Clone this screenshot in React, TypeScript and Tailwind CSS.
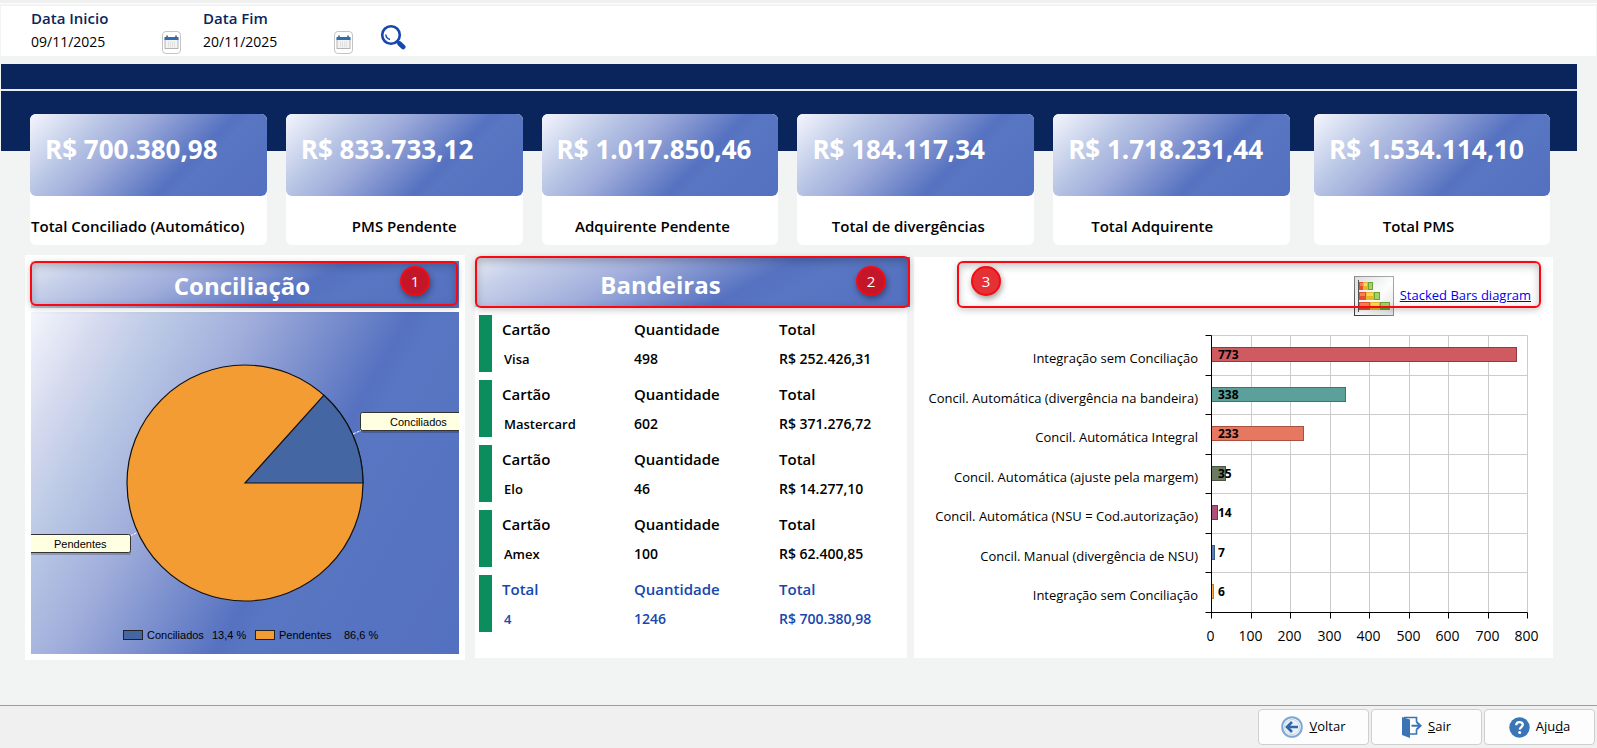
import * as React from "react";

// ── Data ─────────────────────────────────────────────────────────────────────

interface Summary {
  value: string;
  label: string;
  align: string;
}

const SUMMARIES: Summary[] = [
  { value: "R$ 700.380,98", label: "Total Conciliado (Automático)", align: "text-left" },
  { value: "R$ 833.733,12", label: "PMS Pendente", align: "text-center" },
  { value: "R$ 1.017.850,46", label: "Adquirente Pendente", align: "pr-4 text-center" },
  { value: "R$ 184.117,34", label: "Total de divergências", align: "pr-4 text-center" },
  { value: "R$ 1.718.231,44", label: "Total Adquirente", align: "pr-10 text-center" },
  { value: "R$ 1.534.114,10", label: "Total PMS", align: "pr-7 text-center" },
];

const BRANDS = [
  { title: "Cartão", name: "Visa", count: "498", total: "R$ 252.426,31" },
  { title: "Cartão", name: "Mastercard", count: "602", total: "R$ 371.276,72" },
  { title: "Cartão", name: "Elo", count: "46", total: "R$ 14.277,10" },
  { title: "Cartão", name: "Amex", count: "100", total: "R$ 62.400,85" },
  { title: "Total", name: "4", count: "1246", total: "R$ 700.380,98" },
];

const BARS = [
  { label: "Integração sem Conciliação", value: 773, fill: "#cf5b60", stroke: "#96393f" },
  { label: "Concil. Automática (divergência na bandeira)", value: 338, fill: "#5ba09a", stroke: "#3c746f" },
  { label: "Concil. Automática Integral", value: 233, fill: "#e67761", stroke: "#a9503f" },
  { label: "Concil. Automática (ajuste pela margem)", value: 35, fill: "#6c7c62", stroke: "#4b5744" },
  { label: "Concil. Automática (NSU = Cod.autorização)", value: 14, fill: "#a8527c", stroke: "#7a3456" },
  { label: "Concil. Manual (divergência de NSU)", value: 7, fill: "#5a7fb4", stroke: "#3c5c8c" },
  { label: "Integração sem Conciliação", value: 6, fill: "#f5b04c", stroke: "#b98237" },
];

const TICKS = [0, 100, 200, 300, 400, 500, 600, 700, 800];

// ── Callouts ─────────────────────────────────────────────────────────────────

function Callout({ n, box, badge }: { n: number; box: string; badge: string }) {
  return (
    <>
      <div
        className={`pointer-events-none absolute z-10 rounded-md border-2 border-[#fb0710] shadow-[0_2px_7px_rgba(0,0,0,0.22),inset_0_3px_8px_rgba(0,0,0,0.24)] ${box}`}
      />
      <span
        className={`absolute z-10 flex h-[30px] w-[30px] items-center justify-center rounded-full border-2 border-[#f80a12] text-[15px] leading-none text-white shadow-[1px_3px_6px_rgba(0,0,0,0.4)] ${badge}`}
      >
        {n}
      </span>
    </>
  );
}

// ── Filters ──────────────────────────────────────────────────────────────────

function CalendarIcon() {
  return (
    <svg width="15" height="15" viewBox="0 0 15 15" aria-hidden="true">
      <rect x="1" y="4" width="13" height="9.500" fill="#f3f3f3" stroke="#b4b4b4" strokeWidth="1" />
      <path d="M0.500 2h14v3h-14z" fill="#2f6db3" />
      <path d="M2 0.500h2v1.500H2zM11 0.500h2v1.500h-2z" fill="#6f7d8b" />
      <path d="M4.500 6.500v6M6.500 6.500v6M8.500 6.500v6M10.500 6.500v6" stroke="#e0e0e0" strokeWidth="1" />
    </svg>
  );
}

function DateField({ id, label, initial }: { id: string; label: string; initial: string }) {
  const [value, setValue] = React.useState(initial);

  return (
    <div className="w-[172px]">
      <label htmlFor={id} className="block text-[15px] leading-6 font-semibold text-[#0a255c]">
        {label}
      </label>
      <div className="flex items-center">
        <input
          id={id}
          value={value}
          onChange={(e) => setValue(e.target.value)}
          className="w-[131px] bg-transparent text-sm leading-6 text-black outline-none"
        />
        <button
          type="button"
          aria-label={`Calendário ${label}`}
          className="flex h-[23px] w-[19px] items-center justify-center rounded border border-[#c4c4c4] bg-white"
        >
          <CalendarIcon />
        </button>
      </div>
    </div>
  );
}

// ── Summary cards ────────────────────────────────────────────────────────────

function SummaryCard({ value, label, align }: Summary) {
  return (
    <div className="rounded-md bg-white">
      <div className="rounded-md bg-[linear-gradient(135deg,#f5f6fd_0%,#b9c6e5_24%,#a0addb_38%,#5571c0_65%,#5876c2_70%,#5470c0_100%)] px-[15px] pt-[17px] pb-[29px] text-[26px] leading-9 font-bold whitespace-nowrap text-white">
        {value}
      </div>
      <div className={`px-px pt-[18px] pb-[7px] text-[15px] leading-6 font-semibold whitespace-nowrap text-black ${align}`}>
        {label}
      </div>
    </div>
  );
}

// ── Pie chart ────────────────────────────────────────────────────────────────

function PieChart() {
  return (
    <svg viewBox="0 0 428 342" className="block w-full" fontFamily="'Liberation Sans', Arial, sans-serif" fontSize="11">
      <circle cx="214" cy="171" r="118" fill="#f39c34" stroke="#111" strokeWidth="1.200" />
      <path d="M214 171L293 83.200A118 118 0 0 1 332 171Z" fill="#4466a3" stroke="#111" strokeWidth="1.200" />
      <path d="M322 122L330 118.500M99 224L106.500 220.500" stroke="#fff" strokeDasharray="3 1" />

      <rect x="330" y="103" width="120" height="18" rx="2" fill="#000" opacity="0.200" />
      <rect x="329.500" y="100.500" width="120" height="18" rx="2" fill="#ffffe1" stroke="#333" />
      <text x="359" y="114">Conciliados</text>

      <rect x="-20" y="225" width="120" height="18" rx="2" fill="#000" opacity="0.200" />
      <rect x="-20.500" y="222.500" width="120" height="18" rx="2" fill="#ffffe1" stroke="#333" />
      <text x="23" y="236">Pendentes</text>

      <rect x="92.500" y="318.500" width="19" height="9" fill="#4466a3" stroke="#222" />
      <text x="116" y="327">Conciliados</text>
      <text x="181" y="327">13,4 %</text>
      <rect x="224.500" y="318.500" width="19" height="9" fill="#f39c34" stroke="#222" />
      <text x="248" y="327">Pendentes</text>
      <text x="313" y="327">86,6 %</text>
    </svg>
  );
}

// ── Bar chart ────────────────────────────────────────────────────────────────

const AXIS_X = 297.5;
const AXIS_TOP = 18.5;
const AXIS_BOTTOM = 295.5;
const PLOT_W = 316;

function BarChart() {
  const scale = (v: number) => (v / 800) * PLOT_W;
  const rowY = (i: number) => Math.round(18 + (i * 277) / 7) + 0.5;

  return (
    <svg viewBox="0 0 639 341" className="block w-full" fontSize="13">
      {TICKS.map((t) => {
        const x = Math.floor(AXIS_X + scale(t)) + 0.5;
        return (
          <g key={t}>
            <path d={`M${x} ${AXIS_TOP}V${AXIS_BOTTOM}`} stroke="#cccccc" />
            <path d={`M${x} ${AXIS_BOTTOM}v6`} stroke="#000" />
            <text x={x - 1} y="324" fontSize="14" textAnchor="middle">
              {t}
            </text>
          </g>
        );
      })}
      {BARS.map((bar, i) => (
        <g key={i}>
          <path d={`M${AXIS_X} ${rowY(i)}h${PLOT_W}`} stroke="#cccccc" />
          <path d={`M${AXIS_X} ${rowY(i)}h-6`} stroke="#000" />
          <text x="284" y={rowY(i) + 27} textAnchor="end">
            {bar.label}
          </text>
          <rect
            x={AXIS_X}
            y={rowY(i) + 12}
            width={Math.round(scale(bar.value))}
            height="14"
            fill={bar.fill}
            stroke={bar.stroke}
          />
          <text x="304" y={rowY(i) + 23.5} fontSize="12" fontWeight="700">
            {bar.value}
          </text>
        </g>
      ))}
      <path d={`M${AXIS_X} ${AXIS_TOP}V${AXIS_BOTTOM}M${AXIS_X - 6} ${AXIS_BOTTOM}h${PLOT_W + 6}`} stroke="#000" />
    </svg>
  );
}

function StackedBarsIcon() {
  return (
    <svg width="40" height="40" viewBox="0 0 40 40" aria-hidden="true">
      <defs>
        <linearGradient id="frame" x1="0" y1="1" x2="1" y2="0">
          <stop offset="0" stopColor="#3c3c3c" />
          <stop offset="0.600" stopColor="#9a9a9a" />
          <stop offset="1" stopColor="#a8a8a8" />
        </linearGradient>
        <linearGradient id="paper" x1="0" y1="0" x2="1" y2="1">
          <stop offset="0" stopColor="#d9dde2" />
          <stop offset="0.550" stopColor="#fdfdfd" />
          <stop offset="1" stopColor="#e2e2e2" />
        </linearGradient>
      </defs>
      <rect x="0.500" y="0.500" width="39" height="39" fill="url(#paper)" stroke="url(#frame)" />
      <path d="M5 6h4v8H5zM5 16h7v8H5zM5 26h11v8H5z" fill="#e2502f" />
      <path d="M6 7h3v3H6zM6 17h5v3H6zM6 27h9v3H6z" fill="#f58252" />
      <path d="M9 6h5v8H9zM12 16h8v8h-8zM16 26h10v8H16z" fill="#eab52b" />
      <path d="M10 7h3v3h-3zM13 17h6v3h-6zM17 27h8v3h-8z" fill="#f9dc55" />
      <path d="M14 6h5v8h-5zM20 16h6v8h-6zM26 26h10v8H26z" fill="#6ba336" />
      <path d="M15 7h3v6h-3zM21 17h4v6h-4zM27 27h8v4h-8z" fill="#a5d267" />
      <path d="M4.500 4v32" stroke="#555" />
    </svg>
  );
}

// ── Footer ───────────────────────────────────────────────────────────────────

function FooterButton({ icon, children }: { icon: React.ReactNode; children: React.ReactNode }) {
  return (
    <button
      type="button"
      className="flex h-9 w-[111px] items-center justify-center gap-1.5 rounded border border-[#cfcfcf] bg-[#fdfdfd] text-[13px] text-black"
    >
      {icon}
      <span>{children}</span>
    </button>
  );
}

const BackIcon = (
  <svg width="22" height="22" viewBox="0 0 22 22" fill="none" aria-hidden="true">
    <circle cx="11" cy="11" r="9.800" stroke="#7fa6d0" strokeWidth="2" />
    <circle cx="11" cy="11" r="7.600" fill="#e9f0f8" stroke="#c3d5ea" />
    <path d="M17 11H6.500M11 6L6 11l5 5" stroke="#2f68a8" strokeWidth="2.600" />
  </svg>
);

const ExitIcon = (
  <svg width="20" height="22" viewBox="0 0 20 22" aria-hidden="true">
    <path d="M0 1l8 2.500V22l-8-3z" fill="#3a74b4" />
    <path d="M2 1.500h12.500V6M14.500 13.500v4.500H8" fill="none" stroke="#3a74b4" strokeWidth="1.600" />
    <path d="M9.500 9.750h8M14.500 6l4 3.750-4 3.750" fill="none" stroke="#3a74b4" strokeWidth="2" />
  </svg>
);

const HelpIcon = (
  <svg width="21" height="21" viewBox="0 0 21 21" aria-hidden="true">
    <circle cx="10.500" cy="10.500" r="10.200" fill="#3a75b5" />
    <path d="M7.200 8.200c0-4 6.600-4 6.600-.4 0 2.200-3.100 2.400-3.100 4.800" fill="none" stroke="#fff" strokeWidth="2.300" />
    <circle cx="10.700" cy="15.600" r="1.500" fill="#fff" />
  </svg>
);

// ── Page ─────────────────────────────────────────────────────────────────────

const HEADER_GRADIENT =
  "bg-[linear-gradient(152deg,#e6ebf6_0%,#c8d1ea_12%,#a0addb_35%,#5571c0_62%,#5876c2_72%,#5470c0_100%)]";

export default function App() {
  return (
    <div className="flex min-h-screen flex-col bg-[#f1f4f3] font-['Open_Sans','Noto_Sans',sans-serif] text-black">
      <div className="h-1 border-b border-white bg-[#f0f0f0]" />

      {/* Filters */}
      <div className="mx-px mt-0.5 flex bg-white pb-0.5 pl-[30px]">
        <DateField id="inicio" label="Data Inicio" initial="09/11/2025" />
        <DateField id="fim" label="Data Fim" initial="20/11/2025" />
        <button type="button" aria-label="Pesquisar" className="ml-[5px] self-end pb-1">
          <svg width="26" height="26" viewBox="0 0 26 26" fill="none" aria-hidden="true">
            <circle cx="11" cy="11" r="8.800" stroke="#1646ae" strokeWidth="2.600" />
            <path d="M5.800 10.500c.2 2.600 1.800 4.400 4.200 5" stroke="#1646ae" strokeWidth="1.400" />
            <path d="M17.500 17.500l1.500 1.500" stroke="#1646ae" strokeWidth="2" />
            <path d="M19.500 19.500l3.700 3.500" stroke="#1646ae" strokeWidth="4.600" strokeLinecap="round" />
          </svg>
        </button>
      </div>

      {/* Summary band */}
      <div className="mt-2 mr-5 ml-px bg-[#e9ecf5]">
        <div className="h-[25px] bg-[#0a255c]" />
        <div className="mt-0.5 h-[60px] bg-[#0a255c]" />
      </div>
      <div className="-mt-[37px] grid grid-cols-[1260fr_236fr] gap-6 pr-[47px] pl-[30px]">
        <div className="grid grid-cols-5 gap-[19px]">
          {SUMMARIES.slice(0, 5).map((s) => (
            <SummaryCard key={s.label} {...s} />
          ))}
        </div>
        <SummaryCard {...SUMMARIES[5]} />
      </div>

      {/* Panels */}
      <div className="mt-2.5 mb-11 grid grid-cols-[882fr_639fr] items-center gap-[7px] pr-11 pl-[25px]">
        <div className="grid grid-cols-[440fr_432fr] items-center gap-2.5">
          <section className="bg-white p-1.5">
            <div className={`relative pt-[7px] pr-1.5 pb-1 text-center ${HEADER_GRADIENT}`}>
              <h2 className="text-2xl leading-9 font-bold text-white">Conciliação</h2>
              <Callout n={1} box="top-0 right-px bottom-0.5 -left-px" badge="top-[5px] right-[29px] bg-[#c31628]" />
            </div>
            <div className="mt-1 bg-[linear-gradient(120deg,#f3f6fc_0%,#d5d9ee_12%,#bccae6_21%,#a0addb_36%,#5571c0_61%,#5876c2_65%,#5470c0_100%)]">
              <PieChart />
            </div>
          </section>

          <section className="bg-white pb-[26px]">
            <div className={`relative -mr-[3px] pt-2.5 pr-16 pb-1 text-center ${HEADER_GRADIENT}`}>
              <h2 className="text-2xl leading-9 font-bold text-white">Bandeiras</h2>
              <Callout n={2} box="-top-px right-0 -bottom-px left-0" badge="top-[9px] right-[24px] bg-[#c31628]" />
            </div>
            <div className="flex flex-col gap-2 pt-2 pl-1">
              {BRANDS.map((b) => (
                <dl
                  key={b.name}
                  className={`grid h-[57px] grid-cols-[132fr_145fr_128fr] border-l-[13px] border-[#0c8d5e] pt-0.5 pl-2.5 leading-6 font-semibold ${
                    b.title === "Total" ? "text-[#1746ae]" : "text-black"
                  }`}
                >
                  <div className="space-y-1.5">
                    <dt className="text-[15px]">{b.title}</dt>
                    <dd className="pl-0.5 text-[13px]">{b.name}</dd>
                  </div>
                  <div className="space-y-1.5">
                    <dt className="text-[15px]">Quantidade</dt>
                    <dd className="text-sm leading-6">{b.count}</dd>
                  </div>
                  <div className="space-y-1.5">
                    <dt className="text-[15px]">Total</dt>
                    <dd className="text-sm leading-6">{b.total}</dd>
                  </div>
                </dl>
              ))}
            </div>
          </section>
        </div>

        <section className="bg-white">
          <div className="relative flex items-center justify-end gap-1.5 pt-[19px] pr-[22px] pb-px">
            <StackedBarsIcon />
            <a href="#stacked" className="text-[13px] text-[#0000ee] underline">
              Stacked Bars diagram
            </a>
            <Callout n={3} box="top-1 right-3 bottom-[9px] left-[43px]" badge="top-[9px] left-[57px] bg-[#e53036]" />
          </div>
          <BarChart />
        </section>
      </div>

      {/* Footer */}
      <footer className="mt-auto flex justify-end gap-0.5 border-t border-[#9a9f9d] bg-[#f0f0f0] pt-[3px] pr-0.5 pb-[3px]">
        <FooterButton icon={BackIcon}>
          <u>V</u>oltar
        </FooterButton>
        <FooterButton icon={ExitIcon}>
          <u>S</u>air
        </FooterButton>
        <FooterButton icon={HelpIcon}>
          Aju<u>d</u>a
        </FooterButton>
      </footer>
    </div>
  );
}
